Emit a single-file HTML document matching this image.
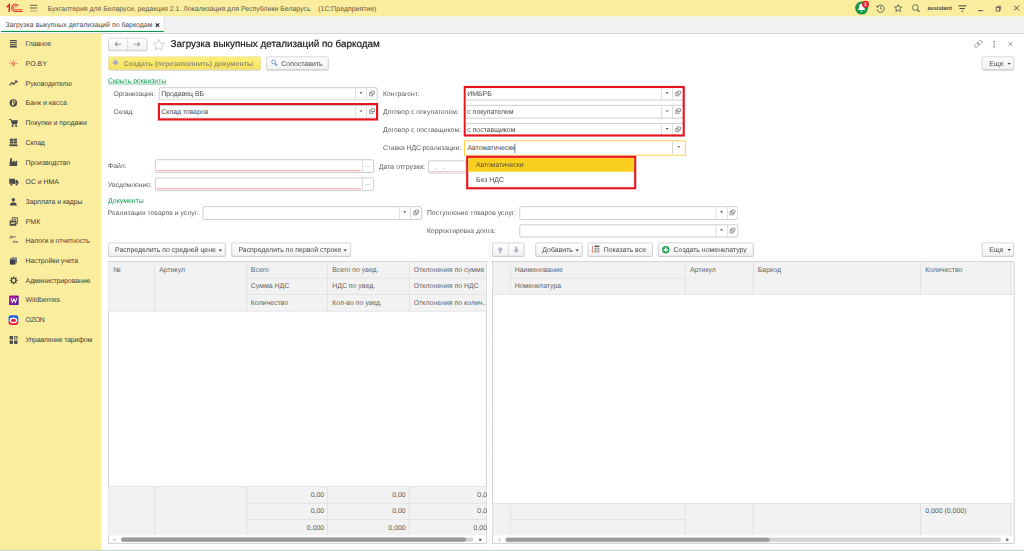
<!DOCTYPE html><html lang="ru"><head><meta charset="utf-8"><title>Загрузка выкупных детализаций по баркодам</title><style>
html,body{margin:0;padding:0;background:#fff;}
body{width:1024px;height:551px;overflow:hidden;position:relative;}
#root{position:absolute;left:0;top:0;width:1920px;height:1033px;transform:scale(0.5333333);transform-origin:0 0;font-family:"Liberation Sans",sans-serif;font-size:13px;color:#424242;overflow:hidden;text-rendering:geometricPrecision;}
.a{position:absolute;box-sizing:border-box;}
.t{white-space:nowrap;}
.y{background:#fbed9e;}
.inp{background:#fff;border:1px solid #a3a3a3;border-radius:3px;}
.btn{background:linear-gradient(#ffffff,#f1f1f1);border:1px solid #b5b5b5;border-radius:3px;box-shadow:0 1px 1px rgba(0,0,0,.25);}
.vd{background:#bdbdbd;width:1px;}
.hd{background:#f2f2f2;}
.gl{background:#d6d6d6;}
.lbl{color:#5a5a5a;}
.hdr{color:#636363;}
.red{border:4.200px solid #e8151d;}
.tri{width:0;height:0;border-left:2.700px solid transparent;border-right:2.700px solid transparent;border-top:3.400px solid #555;}
svg{position:absolute;overflow:visible;}
</style></head><body><div id="root"><div class="a y" style="left:0.0px;top:0.0px;width:1920.0px;height:30.75px;"></div><svg class="a" style="left:0px;top:0px" width="48.75" height="30.0" viewBox="0 0 26 16"><g fill="none" stroke="#e2222c"><path d="M6.900 7.100 L9.300 4.700 V11.900" stroke-width="1.500"/><path d="M18.250 5.840 A3.600 3.600 0 1 0 15.300 11.500 H22.500" stroke-width="1.050"/><path d="M16.800 6.850 A1.850 1.850 0 1 0 15.300 9.750 H22.500" stroke-width="0.850"/></g></svg><div class="a " style="left:56.06px;top:9.41px;width:14.06px;height:1.42px;background:#6f6a4f;"></div><div class="a " style="left:56.06px;top:14.47px;width:14.06px;height:1.43px;background:#6f6a4f;"></div><div class="a " style="left:56.06px;top:19.54px;width:14.06px;height:1.43px;background:#6f6a4f;"></div><div class="a t hdr" style="left:89.06px;top:7.68px;height:18.75px;line-height:18.75px;font-size:13px;color:#5a5a4a;">Бухгалтерия для Беларуси, редакция 2.1. Локализация для Республики Беларусь&nbsp;&nbsp;&nbsp; (1С:Предприятие)</div><svg class="a" style="left:1603.12px;top:0.0px" width="28.12" height="30.0" viewBox="0 0 30 32"><circle cx="13.400" cy="16.200" r="13" fill="#1a9847"/><path d="M13.400 7.500 c-3.800 0 -5 3.500 -5.200 6.800 c-0.200 3.200 -1.600 4.700 -2.600 5.900 h15.600 c-1 -1.200 -2.400 -2.700 -2.600 -5.900 c-0.200 -3.300 -1.400 -6.800 -5.200 -6.800 z M11.400 21.600 a2 2 0 0 0 4 0 z" fill="#fff"/><circle cx="21.200" cy="8.400" r="7" fill="#e3212b"/><text x="21.200" y="12.200" font-size="10.500" font-weight="bold" text-anchor="middle" fill="#fff" font-family="Liberation Sans, sans-serif">1</text></svg><svg class="a" style="left:1641.56px;top:6.56px" width="17.81" height="17.81" viewBox="0 0 19 19"><g fill="none" stroke="#4d4d4d" stroke-width="1.700"><path d="M3.200 6.500 A7.300 7.300 0 1 1 2.500 11.500"/><path d="M9.800 5.500 V10 L13 12"/></g><path d="M0.500 4 L6 4.500 L3 8.500 Z" fill="#4d4d4d"/></svg><svg class="a" style="left:1675.88px;top:6.75px" width="16.12" height="16.12" viewBox="0 0 20 20"><path d="M10 1.800 L12.500 7.400 L18.600 8 L14 12.100 L15.300 18.100 L10 15 L4.700 18.100 L6 12.100 L1.400 8 L7.500 7.400 Z" fill="none" stroke="#4d4d4d" stroke-width="1.800" stroke-linejoin="round"/></svg><svg class="a" style="left:1709.25px;top:6.75px" width="16.88" height="16.88" viewBox="0 0 20 20"><circle cx="8.500" cy="8.500" r="6.500" fill="none" stroke="#4d4d4d" stroke-width="1.700"/><path d="M13.200 13.200 L18 18" stroke="#4d4d4d" stroke-width="2.600"/></svg><div class="a t " style="left:1739.06px;top:6.67px;height:18.75px;line-height:18.75px;font-size:10.5px;font-weight:bold;color:#444;">assistant</div><div class="a " style="left:1796.62px;top:10.12px;width:15.37px;height:1.5px;background:#4d4d4d;"></div><div class="a " style="left:1799.25px;top:15.19px;width:10.12px;height:1.5px;background:#4d4d4d;"></div><div class="a " style="left:1802.81px;top:19.88px;width:3.0px;height:1.69px;background:#4d4d4d;"></div><div class="a " style="left:1834.31px;top:18.75px;width:8.81px;height:1.88px;background:#4d4d4d;"></div><svg class="a" style="left:1866.75px;top:10.5px" width="10.12" height="10.5" viewBox="0 0 10.800 11.200"><g fill="none" stroke="#4d4d4d" stroke-width="1.500"><rect x="0.800" y="3.400" width="7" height="7"/><path d="M3.200 3.400 V0.800 H10 V8 H7.800"/></g></svg><svg class="a" style="left:1901.25px;top:10.12px" width="10.12" height="10.12" viewBox="0 0 10 10"><path d="M0.500 0.500 L9.500 9.500 M9.500 0.500 L0.500 9.500" stroke="#444" stroke-width="1.700" fill="none"/></svg><div class="a " style="left:0.0px;top:30.75px;width:1920.0px;height:31.88px;background:#f1f1f1;border-bottom:1.500px solid #c2bcc2;"></div><div class="a " style="left:0.0px;top:30.75px;width:307.5px;height:30.56px;background:#fff;border-right:1px solid #cfcfcf;"></div><div class="a " style="left:1.88px;top:57.56px;width:304.69px;height:2.06px;background:#0b9a4d;"></div><div class="a t " style="left:10.31px;top:37.68px;height:18.75px;line-height:18.75px;font-size:13px;color:#4a4a4a;">Загрузка выкупных детализаций по баркодам</div><svg class="a" style="left:291.19px;top:43.12px" width="8.25" height="8.25" viewBox="0 0 10 10"><path d="M1 1 L9 9 M9 1 L1 9" stroke="#2a2a2a" stroke-width="2.700" fill="none"/></svg><div class="a y" style="left:0.0px;top:62.62px;width:190.12px;height:970.5px;"></div><svg class="a" style="left:17.44px;top:74.34px" width="16.12" height="16.12" viewBox="0 0 16 16"><rect x="1.500" y="1" width="13" height="2" fill="#4a4a4a"/><rect x="1.500" y="4.5" width="13" height="2" fill="#4a4a4a"/><rect x="1.500" y="8" width="13" height="2" fill="#4a4a4a"/><rect x="1.500" y="11.5" width="13" height="3.5" fill="#4a4a4a"/></svg><svg class="a" style="left:17.44px;top:111.32px" width="16.12" height="16.12" viewBox="0 0 16 16"><g stroke="#e0303a" stroke-width="1.100" fill="none" stroke-dasharray="2.200 1.200"><path d="M8 6 V0.500 M8 10 V15.500 M6 8 H0.500 M10 8 H15.500 M6.500 6.500 L2.800 2.800 M9.500 6.500 L13.200 2.800 M6.500 9.500 L2.800 13.200 M9.500 9.500 L13.200 13.200"/></g><circle cx="8" cy="8" r="1.600" fill="none" stroke="#e0303a" stroke-width="1.100"/></svg><svg class="a" style="left:17.44px;top:148.29px" width="16.12" height="16.12" viewBox="0 0 16 16"><path d="M1 12 L5.500 7 L8.500 10 L13.500 4.500" fill="none" stroke="#4a4a4a" stroke-width="2.200"/><path d="M10 3 H15.500 V8.500 Z" fill="#4a4a4a"/></svg><svg class="a" style="left:17.44px;top:185.27px" width="16.12" height="16.12" viewBox="0 0 16 16"><circle cx="8" cy="8" r="7" fill="#4a4a4a"/><path d="M6.500 12.500 V4 H9 a2.300 2.300 0 0 1 0 4.600 H5 M5 10.500 H9.500" stroke="#fbed9e" stroke-width="1.500" fill="none"/></svg><svg class="a" style="left:17.06px;top:221.87px" width="16.88" height="16.88" viewBox="0 0 16 16"><path d="M0.300 1.200 H3.800 L4.600 3.400 H16 L14 10.800 H5.200 L2.800 2.800 H0.300 Z" fill="#4a4a4a"/><circle cx="6.300" cy="13.600" r="1.800" fill="#4a4a4a"/><circle cx="12.600" cy="13.600" r="1.800" fill="#4a4a4a"/></svg><svg class="a" style="left:17.44px;top:259.22px" width="16.12" height="16.12" viewBox="0 0 16 16"><rect x="1.5" y="1" width="6.200" height="4" fill="#4a4a4a"/><rect x="8.5" y="1" width="6.200" height="4" fill="#4a4a4a"/><rect x="1.5" y="6" width="6.200" height="4" fill="#4a4a4a"/><rect x="8.5" y="6" width="6.200" height="4" fill="#4a4a4a"/><rect x="0.500" y="11.500" width="15" height="3.500" fill="#4a4a4a"/></svg><svg class="a" style="left:17.44px;top:296.19px" width="16.12" height="16.12" viewBox="0 0 16 16"><path d="M1 15 V7.500 L5.500 4.500 V8 L10 4.500 V8 L15 4.500 V15 Z" fill="#4a4a4a"/><rect x="2" y="0.800" width="3.500" height="3.200" fill="#4a4a4a"/><path d="M2 4 H5.500 V6 L2 8.200 Z" fill="#4a4a4a"/></svg><svg class="a" style="left:16.69px;top:332.42px" width="17.62" height="17.62" viewBox="0 0 16 16"><path d="M0.300 3 H10 V11.800 H0.300 Z M10.800 5.200 H14 L16 8.200 V11.800 H10.800 Z" fill="#4a4a4a"/><circle cx="4" cy="12.600" r="2" fill="#4a4a4a" stroke="#fbed9e" stroke-width="0.700"/><circle cx="12.800" cy="12.600" r="2" fill="#4a4a4a" stroke="#fbed9e" stroke-width="0.700"/></svg><svg class="a" style="left:17.44px;top:370.14px" width="16.12" height="16.12" viewBox="0 0 16 16"><circle cx="8" cy="4.600" r="3.200" fill="#4a4a4a"/><path d="M1.500 15 C1.500 10.800 4.500 9.300 8 9.300 C11.500 9.300 14.500 10.800 14.500 15 Z" fill="#4a4a4a"/></svg><svg class="a" style="left:17.06px;top:406.74px" width="16.88" height="16.88" viewBox="0 0 16 16"><rect x="1" y="6" width="12" height="9.500" rx="1" fill="#4a4a4a"/><rect x="3" y="9" width="8" height="3.200" fill="#cdbf86"/><path d="M5.500 6 V1.200 H14.800 V11.500 H13" fill="none" stroke="#4a4a4a" stroke-width="1.500"/><rect x="8" y="3" width="4.500" height="1.600" fill="#4a4a4a"/></svg><div class="a t" style="left:18.0px;top:442.41px;font-size:6.800px;line-height:8px;font-weight:bold;font-style:italic;color:#5a5a5a;">Дт</div><div class="a t" style="left:24.0px;top:450.66px;font-size:6.800px;line-height:8px;font-weight:bold;font-style:italic;color:#5a5a5a;">Кт</div><svg class="a" style="left:17.44px;top:481.07px" width="16.12" height="16.12" viewBox="0 0 16 16"><path d="M1.500 5 H11.500 V15 H1.500 Z" fill="#3f3f4a"/><path d="M1.500 5 L4.500 1.500 H14.500 L11.500 5 Z" fill="#8a8a8a"/><path d="M11.500 5 L14.500 1.500 V11.500 L11.500 15 Z" fill="#6a6a6a"/></svg><svg class="a" style="left:17.81px;top:518.42px" width="15.37" height="15.37" viewBox="0 0 16 16"><rect x="6.700" y="0.300" width="2.600" height="4" fill="#4a4a4a" transform="rotate(0 8 8)"/><rect x="6.700" y="0.300" width="2.600" height="4" fill="#4a4a4a" transform="rotate(45 8 8)"/><rect x="6.700" y="0.300" width="2.600" height="4" fill="#4a4a4a" transform="rotate(90 8 8)"/><rect x="6.700" y="0.300" width="2.600" height="4" fill="#4a4a4a" transform="rotate(135 8 8)"/><rect x="6.700" y="0.300" width="2.600" height="4" fill="#4a4a4a" transform="rotate(180 8 8)"/><rect x="6.700" y="0.300" width="2.600" height="4" fill="#4a4a4a" transform="rotate(225 8 8)"/><rect x="6.700" y="0.300" width="2.600" height="4" fill="#4a4a4a" transform="rotate(270 8 8)"/><rect x="6.700" y="0.300" width="2.600" height="4" fill="#4a4a4a" transform="rotate(315 8 8)"/><circle cx="8" cy="8" r="4.300" fill="none" stroke="#4a4a4a" stroke-width="2"/></svg><svg class="a" style="left:16.5px;top:554.08px" width="18.0" height="18.0" viewBox="0 0 16 16"><defs><linearGradient id="wb" x1="0" y1="0" x2="1" y2="1"><stop offset="0" stop-color="#b2169a"/><stop offset="1" stop-color="#5a1a9c"/></linearGradient></defs><rect x="0" y="0" width="16" height="16" rx="1.500" fill="url(#wb)"/><path d="M3 4.500 L5.500 11.500 L8 5.500 L10.500 11.500 L13 4.500" stroke="#fff" stroke-width="1.700" fill="none"/></svg><svg class="a" style="left:16.31px;top:590.87px" width="18.38" height="18.38" viewBox="0 0 16 16"><defs><linearGradient id="oz" x1="0" y1="0" x2="0" y2="1"><stop offset="0.550" stop-color="#1f62e0"/><stop offset="0.750" stop-color="#e8213a"/></linearGradient></defs><rect x="0" y="0" width="16" height="16" rx="4" fill="url(#oz)"/><ellipse cx="8" cy="8.300" rx="6.300" ry="4.700" fill="#fff"/><ellipse cx="8" cy="8.500" rx="4.300" ry="2.700" fill="#e8213a"/></svg><svg class="a" style="left:17.06px;top:628.59px" width="16.88" height="16.88" viewBox="0 0 16 16"><rect x="1" y="1" width="6" height="6" fill="#4a4a4a"/><rect x="9.800" y="1.800" width="4.400" height="4.400" fill="none" stroke="#4a4a4a" stroke-width="1.500"/><rect x="1" y="9" width="6" height="6" fill="#4a4a4a"/><rect x="9" y="9" width="6" height="6" fill="#4a4a4a"/></svg><div class="a t " style="left:48.0px;top:73.31px;height:18.75px;line-height:18.75px;font-size:13px;letter-spacing:-0.292px;color:#3c3c3c;">Главное</div><div class="a t " style="left:48.0px;top:110.81px;height:18.75px;line-height:18.75px;font-size:13px;letter-spacing:0.021px;color:#3c3c3c;">PO.BY</div><div class="a t " style="left:48.0px;top:148.31px;height:18.75px;line-height:18.75px;font-size:13px;letter-spacing:-0.001px;color:#3c3c3c;">Руководителю</div><div class="a t " style="left:48.0px;top:183.93px;height:18.75px;line-height:18.75px;font-size:13px;letter-spacing:0.066px;color:#3c3c3c;">Банк и касса</div><div class="a t " style="left:48.0px;top:221.43px;height:18.75px;line-height:18.75px;font-size:13px;letter-spacing:-0.031px;color:#3c3c3c;">Покупки и продажи</div><div class="a t " style="left:48.0px;top:258.93px;height:18.75px;line-height:18.75px;font-size:13px;letter-spacing:-0.362px;color:#3c3c3c;">Склад</div><div class="a t " style="left:48.0px;top:296.43px;height:18.75px;line-height:18.75px;font-size:13px;letter-spacing:-0.126px;color:#3c3c3c;">Производство</div><div class="a t " style="left:48.0px;top:332.06px;height:18.75px;line-height:18.75px;font-size:13px;letter-spacing:-0.101px;color:#3c3c3c;">ОС и НМА</div><div class="a t " style="left:48.0px;top:369.56px;height:18.75px;line-height:18.75px;font-size:13px;letter-spacing:-0.130px;color:#3c3c3c;">Зарплата и кадры</div><div class="a t " style="left:48.0px;top:407.06px;height:18.75px;line-height:18.75px;font-size:13px;letter-spacing:0.399px;color:#3c3c3c;">РМК</div><div class="a t " style="left:48.0px;top:442.68px;height:18.75px;line-height:18.75px;font-size:13px;letter-spacing:-0.208px;color:#3c3c3c;">Налоги и отчетность</div><div class="a t " style="left:48.0px;top:480.18px;height:18.75px;line-height:18.75px;font-size:13px;letter-spacing:-0.135px;color:#3c3c3c;">Настройки учета</div><div class="a t " style="left:48.0px;top:517.68px;height:18.75px;line-height:18.75px;font-size:13px;letter-spacing:-0.167px;color:#3c3c3c;">Администрирование</div><div class="a t " style="left:48.0px;top:553.31px;height:18.75px;line-height:18.75px;font-size:13px;letter-spacing:-0.047px;color:#3c3c3c;">Wildberries</div><div class="a t " style="left:48.0px;top:590.81px;height:18.75px;line-height:18.75px;font-size:13px;letter-spacing:-0.482px;color:#3c3c3c;">OZON</div><div class="a t " style="left:48.0px;top:628.31px;height:18.75px;line-height:18.75px;font-size:13px;letter-spacing:-0.310px;color:#3c3c3c;">Управление тарифом</div><div class="a btn" style="left:202.5px;top:71.25px;width:73.5px;height:24.0px;"></div><div class="a " style="left:238.69px;top:72.19px;width:1.03px;height:22.12px;background:#c9c9c9;"></div><svg class="a" style="left:213.56px;top:77.06px" width="13.88" height="12.0" viewBox="0 0 14 12"><path d="M13 6 H2 M6 2 L2 6 L6 10" stroke="#9a9a9a" stroke-width="1.900" fill="none"/></svg><svg class="a" style="left:250.31px;top:77.06px" width="13.88" height="12.0" viewBox="0 0 14 12"><path d="M1 6 H12 M8 2 L12 6 L8 10" stroke="#9a9a9a" stroke-width="1.900" fill="none"/></svg><svg class="a" style="left:286.12px;top:72.38px" width="23.62" height="23.06" viewBox="0 0 24 23"><path d="M12 1.500 L15.100 8.500 L22.700 9.200 L17 14.300 L18.700 21.800 L12 17.900 L5.300 21.800 L7 14.300 L1.300 9.200 L8.900 8.500 Z" fill="#fff" stroke="#bdbdbd" stroke-width="1.300" stroke-linejoin="round"/></svg><div class="a t " style="left:319.88px;top:73.28px;height:18.75px;line-height:18.75px;font-size:18.5px;color:#151515;-webkit-text-stroke:0.350px #151515;">Загрузка выкупных детализаций по баркодам</div><svg class="a" style="left:1825.31px;top:74.06px" width="18.56" height="16.88" viewBox="0 0 11 10"><g fill="none" stroke="#8c8c8c" stroke-width="0.750" transform="rotate(-40 5.500 5)"><rect x="0.300" y="3.300" width="5.800" height="3.400" rx="1.700"/><rect x="4.900" y="3.300" width="5.800" height="3.400" rx="1.700"/></g></svg><div class="a " style="left:1862.81px;top:77.06px;width:2.44px;height:2.62px;background:#555;"></div><div class="a " style="left:1862.81px;top:81.56px;width:2.44px;height:2.62px;background:#555;"></div><div class="a " style="left:1862.81px;top:86.06px;width:2.44px;height:2.62px;background:#555;"></div><svg class="a" style="left:1890.94px;top:79.31px" width="7.12" height="7.12" viewBox="0 0 10 10"><path d="M0.500 0.500 L9.500 9.500 M9.500 0.500 L0.500 9.500" stroke="#6f6f6f" stroke-width="2.200" fill="none"/></svg><div class="a " style="left:202.5px;top:105.56px;width:286.13px;height:25.5px;background:linear-gradient(#fdf07c,#f6e25c);border:1px solid #e0cc60;border-radius:3px;box-shadow:0 1px 1px rgba(0,0,0,.25);"></div><svg class="a" style="left:210.0px;top:111.94px" width="13.12" height="11.44" viewBox="0 0 14 12"><path d="M4.300 0 H9.700 V4.500 H14 L7 12 L0 4.500 H4.300 Z" fill="#a9adbf"/></svg><div class="a t " style="left:232.12px;top:110.74px;height:18.75px;line-height:18.75px;font-size:13.2px;color:#96926e;font-weight:bold;">Создать (перезаполнить) документы</div><div class="a btn" style="left:498.75px;top:105.56px;width:117.56px;height:25.5px;"></div><svg class="a" style="left:507.75px;top:111.19px" width="13.12" height="13.88" viewBox="0 0 14 15"><circle cx="5.500" cy="5.500" r="4" fill="#fff" stroke="#4a7cc2" stroke-width="1.500"/><path d="M8.500 8.800 L12.500 13.200" stroke="#4a7cc2" stroke-width="2.200"/></svg><div class="a t " style="left:527.44px;top:110.81px;height:18.75px;line-height:18.75px;font-size:13px;color:#4a4a4a;">Сопоставить</div><div class="a btn" style="left:1841.25px;top:105.56px;width:59.62px;height:25.5px;"></div><div class="a t " style="left:1854.94px;top:110.81px;height:18.75px;line-height:18.75px;font-size:13px;letter-spacing:0.246px;color:#4a4a4a;">Еще</div><svg class="a" style="left:1889.06px;top:117.56px" width="6.38" height="3.56" viewBox="0 0 34 19"><path d="M0 0 H34 L17 19 Z" fill="#3a3a3a"/></svg><div class="a t " style="left:202.5px;top:142.75px;height:18.75px;line-height:18.75px;font-size:12.8px;color:#0d9a4e;text-decoration:underline;">Скрыть реквизиты</div><div class="a t lbl" style="left:212.81px;top:167.16px;height:18.75px;line-height:18.75px;font-size:12.7px;letter-spacing:-0.193px;">Организация:</div><div class="a inp" style="left:298.12px;top:163.69px;width:409.69px;height:24.19px;"></div><div class="a t " style="left:302.44px;top:167.06px;height:18.75px;line-height:18.75px;font-size:13px;letter-spacing:-0.039px;color:#4a4a4a;">Продавец ВБ</div><div class="a " style="left:686.62px;top:164.81px;width:1.01px;height:21.94px;background:#c4c4c4;"></div><svg class="a" style="left:691.88px;top:169.5px" width="10.88" height="10.88" viewBox="0 0 11 11"><g fill="none" stroke="#4a4a4a" stroke-width="1.100"><rect x="4" y="1" width="6" height="5.200" rx="0.300"/><path d="M4 3.800 H1 V9.800 H7 V6.200"/></g></svg><div class="a " style="left:666.19px;top:164.81px;width:1.01px;height:21.94px;background:#c4c4c4;"></div><svg class="a" style="left:673.78px;top:172.88px" width="5.81" height="3.19" viewBox="0 0 31 17"><path d="M0 0 H31 L15.500 17 Z" fill="#4d4d4d"/></svg><div class="a t lbl" style="left:212.81px;top:200.91px;height:18.75px;line-height:18.75px;font-size:12.7px;letter-spacing:-0.386px;">Склад:</div><div class="a inp" style="left:298.12px;top:197.25px;width:409.69px;height:24.38px;"></div><div class="a t " style="left:302.44px;top:200.81px;height:18.75px;line-height:18.75px;font-size:13px;letter-spacing:-0.152px;color:#4a4a4a;">Склад товаров</div><div class="a " style="left:686.62px;top:198.38px;width:1.01px;height:22.13px;background:#c4c4c4;"></div><svg class="a" style="left:691.88px;top:203.16px" width="10.88" height="10.88" viewBox="0 0 11 11"><g fill="none" stroke="#4a4a4a" stroke-width="1.100"><rect x="4" y="1" width="6" height="5.200" rx="0.300"/><path d="M4 3.800 H1 V9.800 H7 V6.200"/></g></svg><div class="a " style="left:666.19px;top:198.38px;width:1.01px;height:22.13px;background:#c4c4c4;"></div><svg class="a" style="left:673.78px;top:206.53px" width="5.81" height="3.19" viewBox="0 0 31 17"><path d="M0 0 H31 L15.500 17 Z" fill="#4d4d4d"/></svg><div class="a red" style="left:295.69px;top:193.12px;width:412.88px;height:33.19px;"></div><div class="a t lbl" style="left:718.31px;top:167.16px;height:18.75px;line-height:18.75px;font-size:12.7px;letter-spacing:-0.052px;">Контрагент:</div><div class="a t lbl" style="left:718.12px;top:200.91px;height:18.75px;line-height:18.75px;font-size:12.7px;letter-spacing:0.119px;">Договор с покупателем:</div><div class="a t lbl" style="left:718.12px;top:234.66px;height:18.75px;line-height:18.75px;font-size:12.7px;letter-spacing:0.133px;">Договор с поставщиком:</div><div class="a t lbl" style="left:718.12px;top:268.41px;height:18.75px;line-height:18.75px;font-size:12.7px;letter-spacing:-0.114px;">Ставка НДС реализации:</div><div class="a inp" style="left:871.88px;top:163.69px;width:409.69px;height:24.19px;"></div><div class="a t " style="left:876.19px;top:167.06px;height:18.75px;line-height:18.75px;font-size:13px;letter-spacing:-0.031px;color:#4a4a4a;">ИМБРБ</div><div class="a " style="left:1260.38px;top:164.81px;width:1.01px;height:21.94px;background:#c4c4c4;"></div><svg class="a" style="left:1265.62px;top:169.5px" width="10.88" height="10.88" viewBox="0 0 11 11"><g fill="none" stroke="#4a4a4a" stroke-width="1.100"><rect x="4" y="1" width="6" height="5.200" rx="0.300"/><path d="M4 3.800 H1 V9.800 H7 V6.200"/></g></svg><div class="a " style="left:1239.94px;top:164.81px;width:1.01px;height:21.94px;background:#c4c4c4;"></div><svg class="a" style="left:1247.53px;top:172.88px" width="5.81" height="3.19" viewBox="0 0 31 17"><path d="M0 0 H31 L15.500 17 Z" fill="#4d4d4d"/></svg><div class="a inp" style="left:871.88px;top:197.25px;width:409.69px;height:24.38px;"></div><div class="a t " style="left:876.19px;top:200.81px;height:18.75px;line-height:18.75px;font-size:13px;letter-spacing:-0.026px;color:#4a4a4a;">с покупателем</div><div class="a " style="left:1260.38px;top:198.38px;width:1.01px;height:22.13px;background:#c4c4c4;"></div><svg class="a" style="left:1265.62px;top:203.16px" width="10.88" height="10.88" viewBox="0 0 11 11"><g fill="none" stroke="#4a4a4a" stroke-width="1.100"><rect x="4" y="1" width="6" height="5.200" rx="0.300"/><path d="M4 3.800 H1 V9.800 H7 V6.200"/></g></svg><div class="a " style="left:1239.94px;top:198.38px;width:1.01px;height:22.13px;background:#c4c4c4;"></div><svg class="a" style="left:1247.53px;top:206.53px" width="5.81" height="3.19" viewBox="0 0 31 17"><path d="M0 0 H31 L15.500 17 Z" fill="#4d4d4d"/></svg><div class="a inp" style="left:871.88px;top:231.0px;width:409.69px;height:24.37px;"></div><div class="a t " style="left:876.19px;top:234.56px;height:18.75px;line-height:18.75px;font-size:13px;letter-spacing:-0.046px;color:#4a4a4a;">с поставщиком</div><div class="a " style="left:1260.38px;top:232.12px;width:1.01px;height:22.12px;background:#c4c4c4;"></div><svg class="a" style="left:1265.62px;top:236.91px" width="10.88" height="10.88" viewBox="0 0 11 11"><g fill="none" stroke="#4a4a4a" stroke-width="1.100"><rect x="4" y="1" width="6" height="5.200" rx="0.300"/><path d="M4 3.800 H1 V9.800 H7 V6.200"/></g></svg><div class="a " style="left:1239.94px;top:232.12px;width:1.01px;height:22.12px;background:#c4c4c4;"></div><svg class="a" style="left:1247.53px;top:240.28px" width="5.81" height="3.19" viewBox="0 0 31 17"><path d="M0 0 H31 L15.500 17 Z" fill="#4d4d4d"/></svg><div class="a red" style="left:869.44px;top:160.5px;width:414.75px;height:95.06px;"></div><div class="a " style="left:869.62px;top:262.88px;width:416.06px;height:29.06px;background:#fff;border:2px solid #fbd447;border-radius:1px;"></div><div class="a t " style="left:876.38px;top:268.31px;height:18.75px;line-height:18.75px;font-size:13px;letter-spacing:-0.140px;color:#4a4a4a;">Автоматически</div><div class="a " style="left:965.06px;top:268.5px;width:1.12px;height:18.38px;background:#222;"></div><div class="a " style="left:1260.0px;top:265.88px;width:1.01px;height:23.25px;background:#b0b0b0;"></div><svg class="a" style="left:1269.84px;top:274.41px" width="5.81" height="3.19" viewBox="0 0 31 17"><path d="M0 0 H31 L15.500 17 Z" fill="#4d4d4d"/></svg><div class="a " style="left:874.31px;top:291.94px;width:318.56px;height:63.38px;background:#fff;border:4.200px solid #e8151d;"></div><div class="a " style="left:878.06px;top:295.69px;width:311.06px;height:26.81px;background:#fbcf1f;"></div><div class="a t " style="left:892.5px;top:300.18px;height:18.75px;line-height:18.75px;font-size:13px;letter-spacing:-0.140px;color:#55553a;">Автоматически</div><div class="a t " style="left:892.5px;top:328.31px;height:18.75px;line-height:18.75px;font-size:13px;letter-spacing:-0.019px;color:#4a4a4a;">Без НДС</div><div class="a t lbl" style="left:202.69px;top:302.16px;height:18.75px;line-height:18.75px;font-size:12.7px;letter-spacing:-0.050px;">Файл:</div><div class="a inp" style="left:291.0px;top:299.06px;width:409.5px;height:24.56px;"></div><div class="a " style="left:679.13px;top:300.19px;width:1.01px;height:22.31px;background:#c4c4c4;"></div><div class="a t " style="left:684.94px;top:300.88px;height:18.75px;line-height:18.75px;font-size:11px;color:#555;">...</div><div class="a " style="left:293.81px;top:319.31px;width:383.06px;height:1.5px;background:#f3a4a4;"></div><div class="a t lbl" style="left:202.69px;top:337.79px;height:18.75px;line-height:18.75px;font-size:12.7px;letter-spacing:-0.091px;">Уведомление:</div><div class="a inp" style="left:291.0px;top:333.0px;width:409.5px;height:24.56px;"></div><div class="a " style="left:679.13px;top:334.12px;width:1.01px;height:22.31px;background:#c4c4c4;"></div><div class="a t " style="left:684.94px;top:334.63px;height:18.75px;line-height:18.75px;font-size:11px;color:#555;">...</div><div class="a " style="left:293.81px;top:353.25px;width:383.06px;height:1.5px;background:#f3a4a4;"></div><div class="a t lbl" style="left:710.25px;top:303.93px;height:18.75px;line-height:18.75px;font-size:13px;letter-spacing:0.041px;">Дата отгрузки:</div><div class="a inp" style="left:802.88px;top:300.94px;width:71.44px;height:24.0px;"></div><div class="a " style="left:805.69px;top:320.62px;width:65.81px;height:1.5px;background:#f3a4a4;"></div><div class="a t " style="left:815.25px;top:303.93px;height:18.75px;line-height:18.75px;font-size:13px;color:#8a8a8a;">.&nbsp;&nbsp;&nbsp;.</div><div class="a t " style="left:202.5px;top:367.68px;height:18.75px;line-height:18.75px;font-size:13px;color:#0d9a4e;">Документы</div><div class="a t lbl" style="left:201.94px;top:390.29px;height:18.75px;line-height:18.75px;font-size:12.7px;letter-spacing:0.047px;">Реализация товаров и услуг:</div><div class="a inp" style="left:379.88px;top:387.0px;width:410.63px;height:24.56px;"></div><div class="a " style="left:769.31px;top:388.12px;width:1.01px;height:22.31px;background:#c4c4c4;"></div><svg class="a" style="left:774.56px;top:393.0px" width="10.88" height="10.88" viewBox="0 0 11 11"><g fill="none" stroke="#4a4a4a" stroke-width="1.100"><rect x="4" y="1" width="6" height="5.200" rx="0.300"/><path d="M4 3.800 H1 V9.800 H7 V6.200"/></g></svg><div class="a " style="left:748.88px;top:388.12px;width:1.01px;height:22.31px;background:#c4c4c4;"></div><svg class="a" style="left:756.47px;top:396.37px" width="5.81" height="3.19" viewBox="0 0 31 17"><path d="M0 0 H31 L15.500 17 Z" fill="#4d4d4d"/></svg><div class="a t lbl" style="left:800.44px;top:390.29px;height:18.75px;line-height:18.75px;font-size:12.7px;letter-spacing:0.055px;">Поступление товаров услуг:</div><div class="a inp" style="left:974.06px;top:387.0px;width:409.88px;height:24.56px;"></div><div class="a " style="left:1362.75px;top:388.12px;width:1.01px;height:22.31px;background:#c4c4c4;"></div><svg class="a" style="left:1368.0px;top:393.0px" width="10.88" height="10.88" viewBox="0 0 11 11"><g fill="none" stroke="#4a4a4a" stroke-width="1.100"><rect x="4" y="1" width="6" height="5.200" rx="0.300"/><path d="M4 3.800 H1 V9.800 H7 V6.200"/></g></svg><div class="a " style="left:1342.31px;top:388.12px;width:1.01px;height:22.31px;background:#c4c4c4;"></div><svg class="a" style="left:1349.91px;top:396.37px" width="5.81" height="3.19" viewBox="0 0 31 17"><path d="M0 0 H31 L15.500 17 Z" fill="#4d4d4d"/></svg><div class="a t lbl" style="left:800.44px;top:424.04px;height:18.75px;line-height:18.75px;font-size:12.7px;letter-spacing:0.040px;">Корректировка долга:</div><div class="a inp" style="left:974.06px;top:420.94px;width:409.88px;height:24.56px;"></div><div class="a " style="left:1362.75px;top:422.06px;width:1.01px;height:22.31px;background:#c4c4c4;"></div><svg class="a" style="left:1368.0px;top:426.94px" width="10.88" height="10.88" viewBox="0 0 11 11"><g fill="none" stroke="#4a4a4a" stroke-width="1.100"><rect x="4" y="1" width="6" height="5.200" rx="0.300"/><path d="M4 3.800 H1 V9.800 H7 V6.200"/></g></svg><div class="a " style="left:1342.31px;top:422.06px;width:1.01px;height:22.31px;background:#c4c4c4;"></div><svg class="a" style="left:1349.91px;top:430.31px" width="5.81" height="3.19" viewBox="0 0 31 17"><path d="M0 0 H31 L15.500 17 Z" fill="#4d4d4d"/></svg><div class="a btn" style="left:202.5px;top:455.25px;width:220.69px;height:25.69px;"></div><div class="a t " style="left:215.62px;top:459.56px;height:18.75px;line-height:18.75px;font-size:13px;color:#4a4a4a;">Распределить по средней цене</div><svg class="a" style="left:409.88px;top:467.62px" width="6.38" height="3.56" viewBox="0 0 34 19"><path d="M0 0 H34 L17 19 Z" fill="#3a3a3a"/></svg><div class="a btn" style="left:433.69px;top:455.25px;width:223.87px;height:25.69px;"></div><div class="a t " style="left:447.0px;top:459.56px;height:18.75px;line-height:18.75px;font-size:13px;color:#4a4a4a;">Распределить по первой строке</div><svg class="a" style="left:644.25px;top:467.62px" width="6.38" height="3.56" viewBox="0 0 34 19"><path d="M0 0 H34 L17 19 Z" fill="#3a3a3a"/></svg><div class="a btn" style="left:923.06px;top:455.25px;width:59.81px;height:25.69px;"></div><div class="a " style="left:953.25px;top:456.19px;width:1.03px;height:23.81px;background:#c9c9c9;"></div><svg class="a" style="left:932.25px;top:461.62px" width="12.0" height="13.12" viewBox="0 0 12 13"><path d="M6 0.500 L11.500 6.500 H8 V12.500 H4 V6.500 H0.500 Z" fill="#b0b3c4"/></svg><svg class="a" style="left:961.5px;top:461.62px" width="12.0" height="13.12" viewBox="0 0 12 13"><path d="M6 12.500 L11.500 6.500 H8 V0.500 H4 V6.500 H0.500 Z" fill="#b0b3c4"/></svg><div class="a btn" style="left:1003.88px;top:455.25px;width:87.94px;height:25.69px;"></div><div class="a t " style="left:1016.81px;top:459.56px;height:18.75px;line-height:18.75px;font-size:13px;color:#4a4a4a;">Добавить</div><svg class="a" style="left:1078.5px;top:467.62px" width="6.38" height="3.56" viewBox="0 0 34 19"><path d="M0 0 H34 L17 19 Z" fill="#3a3a3a"/></svg><div class="a btn" style="left:1101.56px;top:455.25px;width:122.06px;height:25.69px;"></div><svg class="a" style="left:1107.19px;top:459.94px" width="18.75" height="16.5" viewBox="0 0 20 17.600"><path d="M4 0.500 V14" stroke="#e0453a" stroke-width="1.300"/><path d="M2 12 L4 15.500 L6 12 Z" fill="#e0783a"/><rect x="8" y="0.500" width="10" height="3" fill="#555"/><g fill="#999"><rect x="8" y="5" width="4.500" height="2.500"/><rect x="13.500" y="5" width="4.500" height="2.500"/><rect x="8" y="8.500" width="4.500" height="2.500"/><rect x="13.500" y="8.500" width="4.500" height="2.500"/><rect x="8" y="12" width="4.500" height="2.500"/><rect x="13.500" y="12" width="4.500" height="2.500"/></g></svg><div class="a t " style="left:1131.94px;top:459.56px;height:18.75px;line-height:18.75px;font-size:13px;color:#4a4a4a;">Показать все</div><div class="a btn" style="left:1233.75px;top:455.25px;width:179.25px;height:25.69px;"></div><svg class="a" style="left:1240.69px;top:460.88px" width="14.62" height="14.62" viewBox="0 0 16 16"><circle cx="8" cy="8" r="7.600" fill="#23a24d"/><path d="M8 3.500 V12.500 M3.500 8 H12.500" stroke="#fff" stroke-width="2.800"/></svg><div class="a t " style="left:1263.0px;top:459.56px;height:18.75px;line-height:18.75px;font-size:13px;color:#4a4a4a;">Создать номенклатуру</div><div class="a btn" style="left:1841.25px;top:455.25px;width:59.62px;height:25.69px;"></div><div class="a t " style="left:1854.94px;top:459.56px;height:18.75px;line-height:18.75px;font-size:13px;letter-spacing:0.246px;color:#4a4a4a;">Еще</div><svg class="a" style="left:1889.06px;top:467.44px" width="6.38" height="3.56" viewBox="0 0 34 19"><path d="M0 0 H34 L17 19 Z" fill="#3a3a3a"/></svg><div class="a" style="left:917.44px;top:454.69px;width:0;height:565.31px;border-left:1.200px dashed #c8c8c8;"></div><div class="a " style="left:202.5px;top:489.75px;width:710.44px;height:529.12px;background:#fff;border:1px solid #a8a8a8;"></div><div class="a hd" style="left:203.44px;top:490.69px;width:708.56px;height:92.63px;"></div><div class="a gl" style="left:203.44px;top:582.75px;width:708.56px;height:1.13px;"></div><div class="a gl" style="left:289.18px;top:490.69px;width:1.01px;height:92.63px;"></div><div class="a gl" style="left:461.87px;top:490.69px;width:1.01px;height:92.63px;"></div><div class="a gl" style="left:613.37px;top:490.69px;width:1.01px;height:92.63px;"></div><div class="a gl" style="left:767.31px;top:490.69px;width:1.01px;height:92.63px;"></div><div class="a gl" style="left:462.38px;top:520.93px;width:449.62px;height:1.01px;"></div><div class="a gl" style="left:462.38px;top:551.68px;width:449.62px;height:1.01px;"></div><div class="a t hdr" style="left:212.44px;top:497.06px;height:18.75px;line-height:18.75px;font-size:13px;">№</div><div class="a t hdr" style="left:298.5px;top:497.06px;height:18.75px;line-height:18.75px;font-size:13px;">Артикул</div><div class="a t hdr" style="left:470.25px;top:497.06px;height:18.75px;line-height:18.75px;font-size:13px;">Всего</div><div class="a t hdr" style="left:622.88px;top:497.06px;height:18.75px;line-height:18.75px;font-size:13px;">Всего по увед.</div><div class="a t hdr" style="left:775.88px;top:497.06px;height:18.75px;line-height:18.75px;width:135.56px;overflow:hidden;">Отклонения по сумме</div><div class="a t hdr" style="left:470.25px;top:527.06px;height:18.75px;line-height:18.75px;font-size:13px;">Сумма НДС</div><div class="a t hdr" style="left:622.88px;top:527.06px;height:18.75px;line-height:18.75px;font-size:13px;">НДС по увед.</div><div class="a t hdr" style="left:775.88px;top:527.06px;height:18.75px;line-height:18.75px;width:135.56px;overflow:hidden;">Отклонения по НДС</div><div class="a t hdr" style="left:470.25px;top:558.93px;height:18.75px;line-height:18.75px;font-size:13px;">Количество</div><div class="a t hdr" style="left:622.88px;top:558.93px;height:18.75px;line-height:18.75px;font-size:13px;">Кол-во по увед.</div><div class="a t hdr" style="left:775.88px;top:558.93px;height:18.75px;line-height:18.75px;width:135.56px;overflow:hidden;">Отклонения по колич...</div><div class="a hd" style="left:203.44px;top:912.19px;width:708.56px;height:92.06px;"></div><div class="a gl" style="left:203.44px;top:911.68px;width:708.56px;height:1.01px;"></div><div class="a gl" style="left:289.18px;top:912.19px;width:1.01px;height:92.06px;"></div><div class="a gl" style="left:461.87px;top:912.19px;width:1.01px;height:92.06px;"></div><div class="a gl" style="left:613.37px;top:912.19px;width:1.01px;height:92.06px;"></div><div class="a gl" style="left:767.31px;top:912.19px;width:1.01px;height:92.06px;"></div><div class="a gl" style="left:462.38px;top:942.81px;width:449.62px;height:1.01px;"></div><div class="a gl" style="left:462.38px;top:973.56px;width:449.62px;height:1.01px;"></div><div class="a t hdr" style="right:1312.12px;top:918.93px;height:18.75px;line-height:18.75px;font-size:13px;">0,00</div><div class="a t hdr" style="right:1159.31px;top:918.93px;height:18.75px;line-height:18.75px;font-size:13px;">0,00</div><div class="a t hdr" style="right:1312.12px;top:948.93px;height:18.75px;line-height:18.75px;font-size:13px;">0,00</div><div class="a t hdr" style="right:1159.31px;top:948.93px;height:18.75px;line-height:18.75px;font-size:13px;">0,00</div><div class="a t hdr" style="right:1312.12px;top:980.81px;height:18.75px;line-height:18.75px;font-size:13px;">0,000</div><div class="a t hdr" style="right:1159.31px;top:980.81px;height:18.75px;line-height:18.75px;font-size:13px;">0,000</div><div class="a t hdr" style="right:1006.88px;top:918.93px;height:18.75px;line-height:18.75px;font-size:13px;">0,0</div><div class="a t hdr" style="right:1006.88px;top:948.93px;height:18.75px;line-height:18.75px;font-size:13px;">0,0</div><div class="a t hdr" style="right:1006.88px;top:980.81px;height:18.75px;line-height:18.75px;font-size:13px;">0,00</div><div class="a " style="left:226.5px;top:1008.0px;width:661.88px;height:7.87px;background:#d4d4d4;border-radius:4px;"></div><div class="a " style="left:226.5px;top:1008.0px;width:647.25px;height:7.87px;background:#999;border-radius:4px;"></div><svg class="a" style="left:211.69px;top:1009.13px" width="4.12" height="5.62" viewBox="0 0 22 30"><path d="M22 0 V30 L0 15 Z" fill="#b5b5b5"/></svg><svg class="a" style="left:898.88px;top:1008.94px" width="4.69" height="6.0" viewBox="0 0 25 32"><path d="M0 0 V32 L25 16 Z" fill="#3a3a3a"/></svg><div class="a " style="left:923.06px;top:489.75px;width:978.56px;height:529.12px;background:#fff;border:1px solid #a8a8a8;"></div><div class="a hd" style="left:924.0px;top:490.69px;width:976.69px;height:61.5px;"></div><div class="a gl" style="left:924.0px;top:551.62px;width:976.69px;height:1.13px;"></div><div class="a gl" style="left:956.49px;top:490.69px;width:1.01px;height:61.5px;"></div><div class="a gl" style="left:1284.99px;top:490.69px;width:1.01px;height:61.5px;"></div><div class="a gl" style="left:1412.49px;top:490.69px;width:1.01px;height:61.5px;"></div><div class="a gl" style="left:1725.24px;top:490.69px;width:1.01px;height:61.5px;"></div><div class="a gl" style="left:1893.99px;top:490.69px;width:1.01px;height:61.5px;"></div><div class="a gl" style="left:957.0px;top:520.93px;width:328.5px;height:1.01px;"></div><div class="a t hdr" style="left:965.06px;top:497.06px;height:18.75px;line-height:18.75px;font-size:13px;">Наименование</div><div class="a t hdr" style="left:965.06px;top:527.06px;height:18.75px;line-height:18.75px;font-size:13px;">Номенклатура</div><div class="a t hdr" style="left:1293.75px;top:497.06px;height:18.75px;line-height:18.75px;font-size:13px;">Артикул</div><div class="a t hdr" style="left:1420.88px;top:497.06px;height:18.75px;line-height:18.75px;font-size:13px;">Баркод</div><div class="a t hdr" style="left:1734.75px;top:497.06px;height:18.75px;line-height:18.75px;font-size:13px;">Количество</div><div class="a hd" style="left:924.0px;top:943.31px;width:976.69px;height:60.94px;"></div><div class="a gl" style="left:924.0px;top:942.81px;width:976.69px;height:1.01px;"></div><div class="a gl" style="left:956.49px;top:943.31px;width:1.01px;height:60.94px;"></div><div class="a gl" style="left:1284.99px;top:943.31px;width:1.01px;height:60.94px;"></div><div class="a gl" style="left:1412.49px;top:943.31px;width:1.01px;height:60.94px;"></div><div class="a gl" style="left:1725.24px;top:943.31px;width:1.01px;height:60.94px;"></div><div class="a gl" style="left:1893.99px;top:943.31px;width:1.01px;height:60.94px;"></div><div class="a gl" style="left:957.0px;top:973.56px;width:328.5px;height:1.01px;"></div><div class="a t hdr" style="left:1734.75px;top:948.93px;height:18.75px;line-height:18.75px;font-size:13px;">0,000 (0,000)</div><div class="a " style="left:948.19px;top:1008.0px;width:928.69px;height:7.87px;background:#d4d4d4;border-radius:4px;"></div><div class="a " style="left:948.19px;top:1008.0px;width:495.0px;height:7.87px;background:#999;border-radius:4px;"></div><svg class="a" style="left:933.56px;top:1009.13px" width="4.12" height="5.62" viewBox="0 0 22 30"><path d="M22 0 V30 L0 15 Z" fill="#b5b5b5"/></svg><svg class="a" style="left:1887.0px;top:1008.94px" width="4.69" height="6.0" viewBox="0 0 25 32"><path d="M0 0 V32 L25 16 Z" fill="#3a3a3a"/></svg><div class="a " style="left:0.0px;top:1031.25px;width:1920.0px;height:1.88px;background:#bfd6d6;"></div></div></body></html>
